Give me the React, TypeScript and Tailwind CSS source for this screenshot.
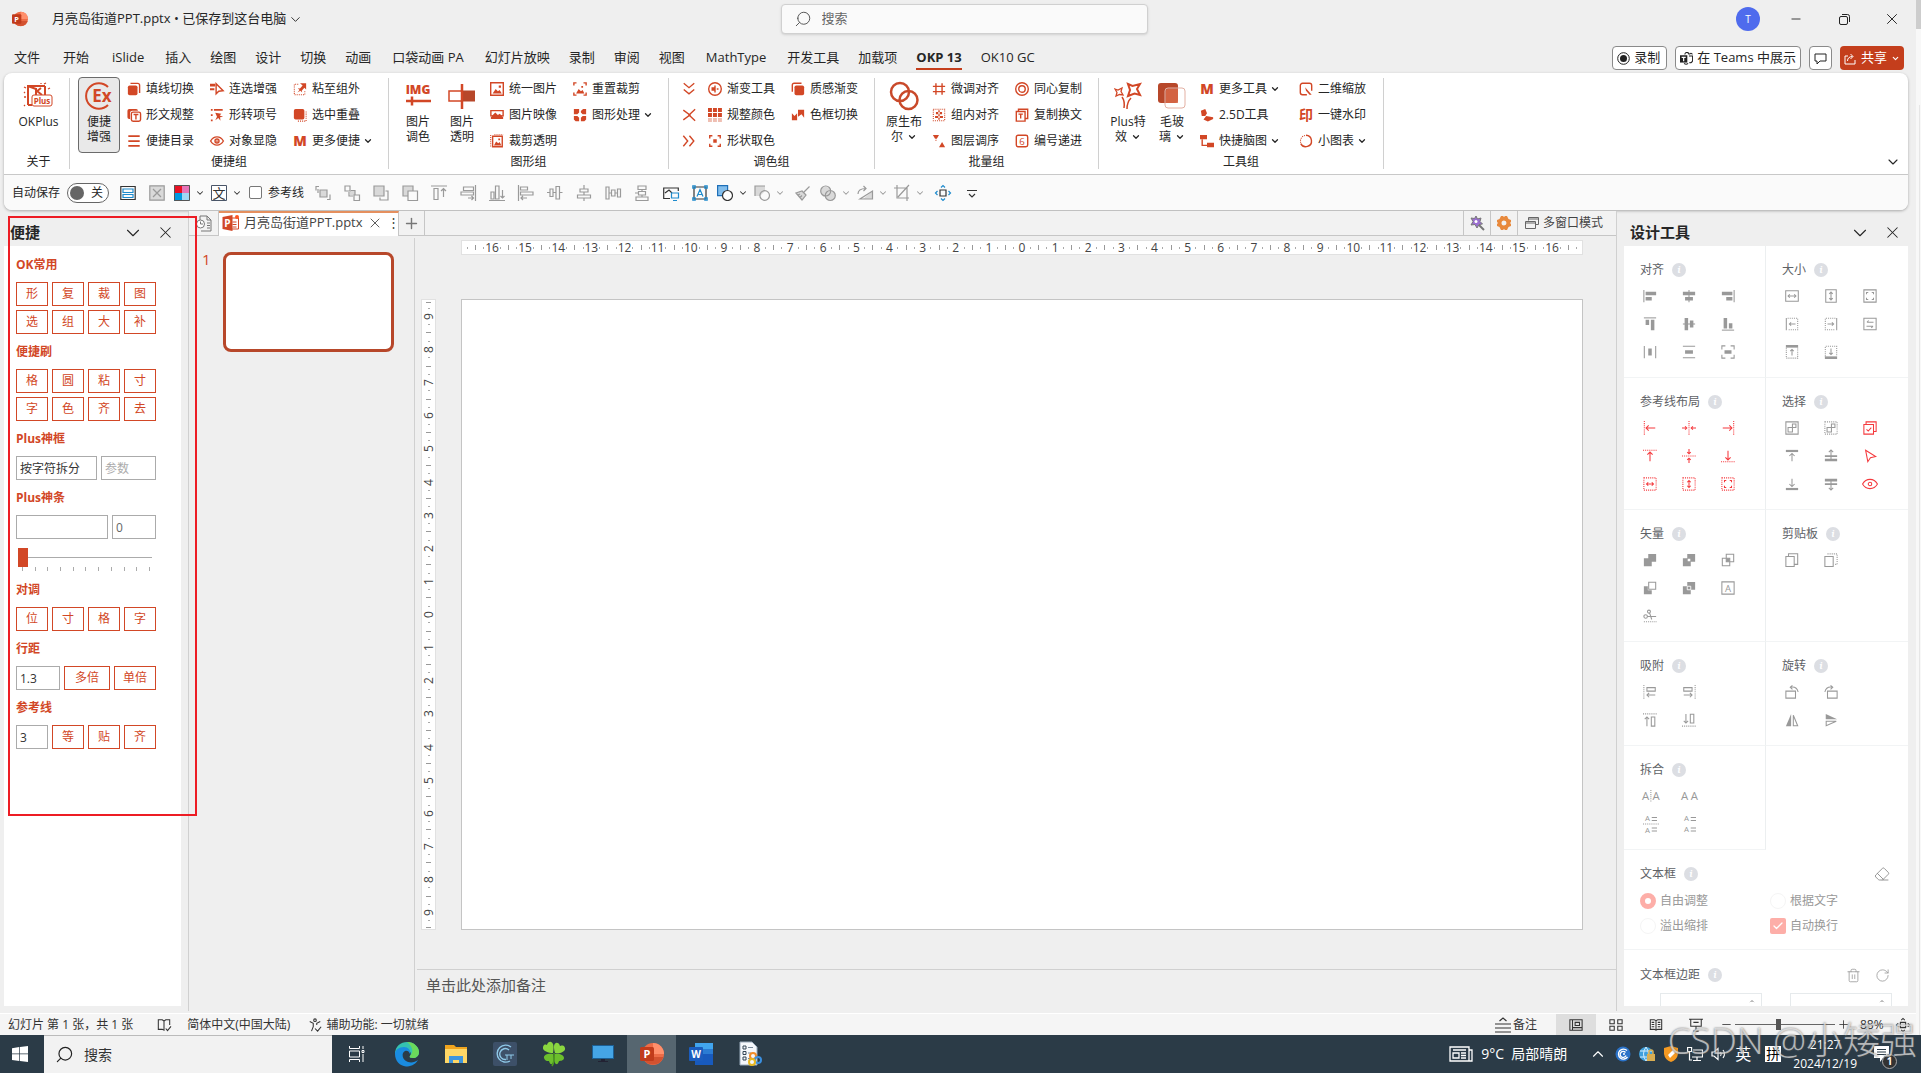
import type { ReactNode } from "react";
import { Check, ChevronDown, ChevronUp, Eraser, Minus, Plus, RotateCw, Search, Trash2, X } from "lucide-react";

type Shape = {
  s?: string; // stroked
  f?: string; // filled
  d?: string; // dotted
  l?: string; // light fill
  h?: string; // blue stroke
  w?: string; // white stroke
  t?: [string, number, number, number][];
};

const shapes: Record<string, Shape> = {
  // ribbon
  fillLine: { f: "M3 4h7a2 2 0 0 1 2 2v7a2 2 0 0 1-2 2H3a2 2 0 0 1-2-2V6a2 2 0 0 1 2-2z", s: "M4 1.600h8.400a2 2 0 0 1 2 2V12.500" },
  shapeText: { f: "M2.500 1h8a2 2 0 0 1 2 2H6a2.500 2.500 0 0 0-2.500 2.500v7H2.500a2 2 0 0 1-2-2V3a2 2 0 0 1 2-2z", s: "M7 4.700h6.500a2 2 0 0 1 2 2v6.500a2 2 0 0 1-2 2H7a2 2 0 0 1-2-2V6.700a2 2 0 0 1 2-2zM7.500 7.500h5.500M10.200 7.500v5.500" },
  menu: { f: "M1.500 1.500h13v2h-13zM1.500 7h13v2h-13zM1.500 12.500h13v2h-13z" },
  chain: { f: "M0 2h6v3H0zM0 7h5v2.500H0z", s: "M7 2v11.500l3-3 5-.5z" },
  shapeItem: { f: "M1 1h2v2H1zM4.500 1h10v2h-10zM1 7h2v2H1zM1 13h2v2H1zM6 5.500l7 1-2 2 4 1.500-3.500.5.500 4-2.500-3-3.500 2.500 2-4z" },
  eye: { s: "M.7 8S3.500 3.300 8 3.300 15.300 8 15.300 8 12.500 12.700 8 12.700.7 8 .7 8zM10.300 8a2.300 2.300 0 1 1-4.600 0 2.300 2.300 0 0 1 4.600 0z", f: "M9 8a1 1 0 1 1-2 0 1 1 0 0 1 2 0z" },
  pasteOut: { d: "M6 2.500H1.500v12h12V10", f: "M8 1.500h7v7l-2-2-3 3.500.5 2-2-2L5 12l2.500-3-2-2 2.500.3 3-3.300z" },
  overlap: { f: "M3 1h8a2 2 0 0 1 2 2v8a2 2 0 0 1-2 2H3a2 2 0 0 1-2-2V3a2 2 0 0 1 2-2z", d: "M15 4v11H5" },
  m: { t: [["M", 8, 13.500, 16]] },
  picture: { s: "M.8.8h14.400v14.400H.8z", f: "M3 13l3.500-5 2.500 2.500 2-1.500 2.500 4zM10 4h2.500v2.500H10z" },
  mirror: { s: "M1 3h14v6H1z", f: "M2 9l4-4 3 3 2-1.500L14 9v1H2zM1 10h14v2.500H1z" },
  cropClear: { s: "M3 2.500h11v12H3z", d: "M.8 1v14M5 .8h10", f: "M4.500 13L7 8.500l2.500 2 1.500-1.500 2 4zM9.500 5h2v2h-2z" },
  cropReset: { s: "M1 4V1h3M12 1h3v3M15 12v3h-3M4 15H1v-3", f: "M3.500 13L6.500 8l2.500 2.500 2-1.500 2 4zM9.500 4.500h2V6.500h-2z" },
  process: { f: "M1 1h6v4l-2 2H1zM9 3.500L11.500 1H15v6h-4L9 5zM1 9h4l2 2v4H3l-2-2zM9 11l2-2h4v4l-2 2H9z" },
  down2: { s: "M2 1.500l6 5 6-5M2 8.500l6 5 6-5" },
  cross: { s: "M1.500 2.500L9 8l-7.500 5.500M15 1.500L8 8l7 6.500" },
  right2: { s: "M1.500 2l5 6-5 6M8.500 2l5 6-5 6" },
  gradient: { s: "M15.200 8A7.200 7.200 0 1 1 .8 8a7.200 7.200 0 0 1 14.400 0zM8 4v8M10 8h2", f: "M4 6h4v4H4z" },
  palette: { f: "M0 0h4.500v4.500H0zM5.700 0h4.500v4.500H5.700zM11.400 0h4.500v4.500h-4.500zM0 5.700h4.500v4.500H0zM5.700 5.700h4.500v4.500H5.700zM11.400 5.700h4.500v4.500h-4.500z", l: "M0 11.400h4.500v4.500H0zM5.700 11.400h4.500v4.500H5.700zM11.400 11.400h4.500v4.500h-4.500z" },
  pick: { s: "M2 5V2h3M11 2h3v3M14 11v3h-3M5 14H2v-3", f: "M6 6h4v4H6z" },
  texture: { f: "M6 4h7a2 2 0 0 1 2 2v7a2 2 0 0 1-2 2H6a2 2 0 0 1-2-2V6a2 2 0 0 1 2-2z", s: "M1.500 11V3.500a2 2 0 0 1 2-2H12" },
  swapColor: { f: "M1 6l3 3 3-3v8H1zM8 2h7v9l-3-4-4 3z" },
  nudge: { s: "M1 5h14M1 11h14M4.500 1.500v13M11.500 1.500v13" },
  innerAlign: { d: "M1.500 1.500h13v13h-13z", f: "M7.200 2.500h1.600v11H7.200zM4.500 4.500h7v2.500h-7zM3.500 9h9v2.500h-9z" },
  layer: { f: "M1 1h7L4.500 7zM8 15h7l-3.500-6zM4 5h1v3H4z" },
  concentric: { s: "M15.200 8A7.200 7.200 0 1 1 .8 8a7.200 7.200 0 0 1 14.400 0zM11.700 8a3.700 3.700 0 1 1-7.400 0 3.700 3.700 0 0 1 7.400 0z" },
  copyText: { s: "M1.500 4h10v11h-10zM4 4V1.500h10.500V12H12M4 7h5M6.500 7v5" },
  number: { s: "M3.500 1.500h9a2 2 0 0 1 2 2v9a2 2 0 0 1-2 2h-9a2 2 0 0 1-2-2v-9a2 2 0 0 1 2-2z", t: [["6", 8, 12, 11]] },
  iso: { f: "M1 3l5-2 2 5-2 3H2zM4 13l3-4 8 1.500v2L9 15.500z" },
  mindmap: { f: "M0 1h8v5H0zM8 10h8v5H8z", s: "M2.500 6v7H8" },
  scale2d: { s: "M9 14.500H4A2.500 2.500 0 0 1 1.500 12v-8A2.500 2.500 0 0 1 4 1.500h8A2.500 2.500 0 0 1 14.500 4V10", f: "M7 6l7.500 8.500H12L8 10z" },
  stamp: { t: [["印", 8, 14, 16]] },
  donut: { s: "M8 1.500A6.500 6.500 0 1 1 2 11", d: "M2 10A6.500 6.500 0 0 1 8 1.500" },
  // quick access
  moveFwd: { l: "M5 5h7v7H5z", s: "M5 5h7v7H5zM4 1.500H1v4M3 4v4M12 14.500h3v-5" },
  group: { l: "M6 5h5v5H6z", s: "M1 1h5v5H1zM10 10h5.500v5.500H10zM7 5.500h4v4M5 7v4h4" },
  front: { l: "M1 1h10v10H1z", s: "M1 1h10v10H1zM12.500 6H15v9H7v-2.500" },
  back: { l: "M1 1h10v5H6v5H1z", s: "M6 11H1V1h10v5M6 6h9.500v9.500H6z" },
  alignTop: { s: "M0 1h16M3 3.500h4v11H3zM12.500 12V3.500M10 6l2.500-2.500L15 6" },
  alignRight: { s: "M15.500 0v16M3.500 2h10v3.500h-10zM1 7h12.500v3H1zM8 13h6M11.500 11l2 2-2 2" },
  alignBottom: { s: "M0 15.500h16M2 7h3v7H2zM6.500 1h3.500v13H6.500zM13.500 5v8M11.500 11l2 2 2-2" },
  alignLeft: { s: "M.5 0v16M2.500 2h7v3h-7zM2.500 7H15v3H2.500zM9 13H3M5 11l-2 2 2 2" },
  middleV: { s: "M0 7.500h3M6 7.500h3M12.500 7.500h3M3 4h3v7.500H3zM9 1.500h3.500v12.500H9z" },
  centerH: { s: "M8 0v4M8 7v3M8 13v3M4 4h8v3H4zM1.500 10h13v3h-13z" },
  distH: { s: "M1 2v12H4V2zM12.500 4v8h3V4zM6.500 5h3.500v6H6.500zM4 8h2.500M10 8h2.500" },
  distV: { s: "M4 1h8v3.500H4zM2 12h12v3.500H2zM4.500 6.500h7v3.500h-7zM8 4.500v2M8 10v2M1 8h3" },
  image: { s: "M7 13.500H.7V3h14.600v3M2 8l4-3 3 3", h: "M8.500 8h7v5h-7zM10 15.500h4" },
  textbox: { s: "M2 2h12v12H2z", h: "M.8.8h2.400v2.400H.8zM12.800.8h2.400v2.400h-2.400zM.8 12.800h2.400v2.400H.8zM12.800 12.800h2.400v2.400h-2.400zM5 11.500L8 4.500l3 7M6 9.500h4" },
  shapes: { l: "M1 1h10v5L6 11H1z", s: "M1 11V1h10M15.500 10.500a4.800 4.800 0 1 1-9.600 0 4.800 4.800 0 0 1 9.600 0z" },
  brush: { l: "M1 8l6 7 4-5-4-4z", s: "M1 8l6 7 4-5-4-4zM9 7l5.500-5.500M7 6l4 4M3 10l2-1M5 12.500l2-2" },
  circles: { l: "M10.500 6A5 5 0 1 1 .7 6a5 5 0 0 1 9.800 0zM15.300 10.500a5 5 0 1 1-10 0 5 5 0 0 1 10 0z", s: "M10.700 6A5 5 0 1 1 .7 6a5 5 0 0 1 10 0zM15.300 10.500a5 5 0 1 1-10 0 5 5 0 0 1 10 0z" },
  rotate: { l: "M6 14l9.500-8v8z", s: "M3 14h12.500V6zM1 9c0-4 3-5.500 8-5.500M6.500 1L9 3.500 6.500 6" },
  crop: { s: "M3 0v13h12M0 3h13v13M4 12L15 0" },
  fit: { s: "M5 5h6v6H5z", h: "M6 2.500L8 .5l2 2M6 13.500l2 2 2-2M2.500 6L.5 8l2 2M13.500 6l2 2-2 2" },
  fitDark: { s: "M5 5h6v6H5zM6 2.500L8 .5l2 2M6 13.500l2 2 2-2M2.500 6L.5 8l2 2M13.500 6l2 2-2 2" },
  more: { s: "M3 5.500h10M5 9l3 3 3-3" },
  boxX: { l: "M.8.8h14.400v14.400H.8z", s: "M.8.8h14.400v14.400H.8zM4 4l8 8M12 4l-8 8" },
  layout: { s: "M.8 1.500h14.400v13H.8z", h: "M3 4h10v3.500H3zM3 9.500h10v3H3z" },
  // design tools
  dLeft: { s: "M1 1v14", f: "M3 3h12v4H3zM3 9h7v4H3z" },
  dCenter: { s: "M8 1v14", f: "M1 3h14v4H1zM3.500 9h9v4h-9z" },
  dRight: { s: "M15 1v14", f: "M1 3h12v4H1zM6 9h7v4H6z" },
  dTop: { s: "M1 1h14", f: "M3 3h4v6H3zM9 3h4v12H9z" },
  dMiddle: { s: "M1 8h14", f: "M3 1h4v14H3zM9 4h4v8H9z" },
  dBottom: { s: "M1 15h14", f: "M3 1h4v12H3zM9 7h4v6H9z" },
  dDistH: { s: "M1.500 1v14M14.500 1v14", f: "M6 4h4v8H6z" },
  dDistV: { s: "M1 1.500h14M1 14.500h14", f: "M3.500 6h9v4h-9z" },
  dCenterBox: { s: "M1 5V1h4M11 1h4v4M15 11v4h-4M5 15H1v-4", f: "M4 6h8v4H4z" },
  sizeW: { s: "M.8 2h14.400v12H.8zM4 8h8M5.500 6L3.500 8l2 2M10.500 6l2 2-2 2" },
  sizeH: { s: "M2 .8h12v14.400H2zM8 4v8M6 5.500l2-2 2 2M6 10.500l2 2 2-2" },
  sizeBoth: { s: "M1 1h14v14H1zM4 6V4h2M10 4h2v2M12 10v2h-2M6 12H4v-2" },
  extL: { s: "M1.500 1v14M5 8h7M7 6L5 8l2 2", d: "M3 1.500h11.500v13H3" },
  extR: { s: "M14.500 1v14M4 8h7M9 6l2 2-2 2", d: "M13 1.500H1.500v13H13" },
  swap: { s: "M1 1.500h14v13H1zM4.500 6H12M6.500 4l-2 2M4 10.500h7.500M9.500 12.500l2-2" },
  extT: { f: "M1 0h14v3H1z", s: "M8 5v7M6 7l2-2 2 2", d: "M1.500 3v12h13V3" },
  extB: { f: "M1 13h14v3H1z", s: "M8 4v7M6 9l2 2 2-2", d: "M1.500 13V1.500h13V13" },
  gLeft: { d: "M1.500 0v16", s: "M3.500 8H14M6.500 5l-3 3 3 3" },
  gCenter: { d: "M8 0v16", s: "M0 8h5.500M3.500 6l2 2-2 2M16 8h-5.500M12.500 6l-2 2 2 2" },
  gRight: { d: "M14.500 0v16", s: "M12.500 8H2M9.500 5l3 3-3 3" },
  gTop: { d: "M0 1.500h16", s: "M8 3.500V14M5 6.500l3-3 3 3" },
  gMiddle: { d: "M0 8h16", s: "M8 0v5.500M6 3.500l2 2 2-2M8 16v-5.500M6 12.500l2-2 2 2" },
  gBottom: { d: "M0 14.500h16", s: "M8 12.500V2M5 9.500l3 3 3-3" },
  gW: { d: "M1 1h14v14H1z", s: "M4 8h8M6 6L4 8l2 2M10 6l2 2-2 2" },
  gH: { d: "M1 1h14v14H1z", s: "M8 4v8M6 6l2-2 2 2M6 10l2 2 2-2" },
  gBox: { d: "M1 1h14v14H1z", s: "M4 6V4h2M10 4h2v2M12 10v2h-2M6 12H4v-2" },
  selAll: { s: "M1 1h14v14H1zM3.500 7.500h5v5h-5zM8.500 3.500h4v4h-4z" },
  selDot: { d: "M1 1h14v14H1z", s: "M3.500 7.500h5v5h-5zM8.500 3.500h4v4h-4z" },
  selCheck: { s: "M1 4h11v11H1zM3.500 4V1H15v11h-3M4 9.500l2 2 3.500-4" },
  up: { f: "M1 1h14v2.500H1z", s: "M8 5v9M5 8l3-3 3 3" },
  upOver: { f: "M1 7h14v2H1zM1 11h14v3H1z", s: "M8 1v11M5.500 3.500L8 1l2.500 2.500" },
  cursor: { s: "M3 1.500l11.500 7-6 1.500-3 4.500z" },
  down: { f: "M1 12.500h14V15H1z", s: "M8 2v9M5 8l3 3 3-3" },
  downOver: { f: "M1 2h14v3H1zM1 7h14v2H1z", s: "M8 4v11M5.500 12.500L8 15l2.500-2.500" },
  watch: { s: "M-.5 8S2.500 2.700 8 2.700 16.500 8 16.500 8 13.500 13.300 8 13.300-.5 8-.5 8zM10 8a2 2 0 1 1-4 0 2 2 0 0 1 4 0z" },
  union: { f: "M6 1h9v9h-5v5H1V6h5z" },
  combine: { f: "M6 1h9v9h-5v5H1V6h5zM6.500 6.500v3h3v-3z" },
  intersect: { s: "M6 1.500h8.500V10H6zM1.500 6H10v8.500H1.500z", f: "M6 6h4v4H6z" },
  subtract: { s: "M6.500 1.500h8V9.500h-8z", f: "M1 6h4.500v4.500H10V15H1z" },
  split: { f: "M6 1h9v9h-5v5H1V6h5z", w: "M6 6h4v4H6z" },
  letterBox: { s: "M1 1h14v14H1z", t: [["A", 8, 12, 11]] },
  cut: { s: "M5 8.500a2 2 0 1 1-4 0 2 2 0 0 1 4 0zM8.500 3a1.700 1.700 0 1 1-3.400 0 1.700 1.700 0 0 1 3.400 0zM5 8.500h10M7.500 4.500L10 12", d: "M1 14.500h15" },
  copy: { s: "M1 4h9.500v11.500H1zM4 4V.8h10.500V13h-4" },
  copyDot: { s: "M1 4h9.500v11.500H1z", d: "M4 1h11v12h-3" },
  snapL: { d: "M1 0v16", s: "M4.500 3H14v4H4.500zM14 11.500H4.500M7 9l-2.500 2.500L7 14" },
  snapR: { d: "M15 0v16", s: "M2 3h9.500v4H2zM2 11.500h9.500M9 9l2.500 2.500L9 14" },
  snapT: { d: "M0 1h16", s: "M9.500 4.500h4V15h-4zM4.500 15V4.500M2 7l2.500-2.500L7 7" },
  snapB: { d: "M0 15h16", s: "M9.500 1.500h4V11.500h-4zM4.500 1v10.500M2 9l2.500 2.500L7 9" },
  rotL: { s: "M1 7h11v8H1zM6 2.500c5-1 8 1 9 5.500M8.500.5L6 2.500 8.500 5" },
  rotR: { s: "M4 7h11v8H4zM10 2.500c-5-1-8 1-9 5.500M7.500.5L10 2.500 7.500 5" },
  flipH: { f: "M7 1v14H1z", s: "M9.500 2.500V14.500H14.500z" },
  flipV: { f: "M2 1v6h13z", s: "M2.500 14.500V9.500H14z" },
  splitH: { d: "M9 1v14", t: [["A", 3, 12.500, 13], ["A", 15, 12.500, 13]] },
  mergeH: { t: [["A", 3, 12.500, 13], ["A", 14, 12.500, 13]] },
  splitV: { d: "M0 8h18", s: "M10 .5h6M10 4h6M10 12.500h6M10 16h6", t: [["A", 5, 5, 9], ["A", 5, 18, 9]] },
  mergeV: { s: "M10 .5h6M10 4h6M10 12.500h6M10 16h6", t: [["A", 5, 5, 9], ["A", 5, 17, 9]] },
  // status bar
  book: { s: "M1.500 2H6l2 1.500V14l-2-1H1.500zM14.500 8V2H10L8 3.500M10 12l2 2.500 4-5" },
  access: { s: "M9.500 2.500a1.500 1.500 0 1 1-3 0 1.500 1.500 0 0 1 3 0zM2 4l4 2v4l-2 5M14 4l-4 2v2M8 12l3 3 4-5" },
  notes: { s: "M0 7h16M0 11h16M0 15h16M4.500 4L8 1l3.500 3" },
  normal: { s: "M1 2h14v12H1zM4 2v12M4 11h11M7 5h5v3.500H7z" },
  sorter: { s: "M1 2h5v4.500H1zM10 2h5v4.500h-5zM1 9.500h5V14H1zM10 9.500h5V14h-5z" },
  reading: { s: "M8 3L6 2H1.500v11H6l2 1 2-1h4.500V2H10zM8 3v11M3 5h3M3 7.500h3M3 10h3M10 5h3M10 7.500h3M10 10h3" },
  show: { s: "M0 1.500h16M2 1.500v8h12v-8M8 9.500v5M5 15h6M5 5h6" },
};

type GlyphProps = { name: string; size?: number; weight?: number; className?: string };

function Glyph({ name, size = 14, weight = 1.2, className }: GlyphProps) {
  const g = shapes[name];
  return (
    <svg width={size} height={size} viewBox="0 0 16 16" className={`shrink-0 overflow-visible ${className ?? ""}`} aria-hidden="true">
      {g.l ? <path d={g.l} fill="currentColor" opacity={0.35} /> : null}
      {g.f ? <path d={g.f} fill="currentColor" fillRule="evenodd" /> : null}
      {g.s ? <path d={g.s} fill="none" stroke="currentColor" strokeWidth={weight} /> : null}
      {g.d ? <path d={g.d} fill="none" stroke="currentColor" strokeWidth={1.2} strokeDasharray="1.2 1.2" /> : null}
      {g.h ? <path d={g.h} fill="none" stroke="#1e8bcd" strokeWidth={1.2} /> : null}
      {g.w ? <path d={g.w} fill="none" stroke="#fff" strokeWidth={1} /> : null}
      {g.t?.map(([text, x, y, fontSize]) => (
        <text key={`${x}-${y}`} x={x} y={y} fontSize={fontSize} fontWeight={name === "m" ? 900 : name === "stamp" ? 700 : 500} textAnchor="middle" fill="currentColor">
          {text}
        </text>
      ))}
    </svg>
  );
}

const tabs: { label: string; wide?: boolean }[] = [
  { label: "文件", wide: true },
  { label: "开始", wide: true },
  { label: "iSlide", wide: true },
  { label: "插入" },
  { label: "绘图" },
  { label: "设计" },
  { label: "切换" },
  { label: "动画" },
  { label: "口袋动画 PA", wide: true },
  { label: "幻灯片放映" },
  { label: "录制" },
  { label: "审阅" },
  { label: "视图" },
  { label: "MathType", wide: true },
  { label: "开发工具" },
  { label: "加载项" },
  { label: "OKP 13" },
  { label: "OK10 GC" },
];

type Command = { icon: string; label: string; menu?: boolean };

function CommandColumn({ items, className }: { items: Command[]; className: string }) {
  return (
    <div className={`-mt-px flex shrink-0 flex-col ${className}`}>
      {items.map((item) => (
        <button key={item.icon} type="button" aria-label={item.label || item.icon} className="flex h-[26px] items-center gap-[5px] whitespace-nowrap text-xs">
          <Glyph name={item.icon} weight={1.6} className="text-[#d24726]" />
          {item.label}
          {item.menu ? <ChevronDown size={10} strokeWidth={3} className="-ml-0.5" /> : null}
        </button>
      ))}
    </div>
  );
}

function BigCommand({ art, lines, active, menu, className }: { art: ReactNode; lines: string[]; active?: boolean; menu?: boolean; className: string }) {
  return (
    <button
      type="button"
      className={`flex h-[76px] shrink-0 flex-col items-center rounded border pt-[3px] text-xs leading-[15px] whitespace-nowrap ${
        active ? "border-[#6b6b6b] bg-[#e9e9e9]" : "border-transparent"
      } ${className}`}
    >
      <span className="mb-[3px] flex h-[30px] items-center">{art}</span>
      <span>{lines[0]}</span>
      <span className="flex items-center gap-1">
        {lines[1]}
        {menu ? <ChevronDown size={10} strokeWidth={3} /> : null}
      </span>
    </button>
  );
}

function RibbonGroup({ label, className, children }: { label: string; className: string; children: ReactNode }) {
  return (
    <section className={`mt-[5px] flex h-[91px] shrink-0 flex-col border-r border-[#d0d0d0] ${className}`}>
      <div className="-mt-px flex h-[78px]">{children}</div>
      <p className="text-center text-xs leading-[14px]">{label}</p>
    </section>
  );
}

const okArt = (
  <svg width="30" height="26" viewBox="0 0 30 26" fill="none" stroke="#d24726" className="overflow-visible">
    <path d="M5 3v19M4 3h18M22 3v9M5 22h4M5 3l8 3v14" strokeWidth="2" />
    <path d="M13 11V5M13 9l5-4M14 8l5 4" strokeWidth="2" />
    <path d="M2 9l-1 1M3 5L1 4M18 1v-1M21 1l2-1M25 6l2-1M1 14h2M2 22l-1 1" strokeWidth="1.300" />
    <rect x="9" y="12" width="20" height="11" rx="2" fill="#fff" />
    <text x="19" y="21" fontSize="8" fontWeight="700" textAnchor="middle" fill="#d24726" stroke="none">Plus</text>
  </svg>
);
const exArt = (
  <svg width="28" height="28" viewBox="0 0 28 28" fill="none" className="overflow-visible">
    <path d="M23 5A12.800 12.800 0 1 0 23 23" stroke="#d24726" strokeWidth="2" />
    <text x="17" y="20" fontSize="17" fontWeight="700" textAnchor="middle" fill="#d24726">Ex</text>
  </svg>
);
const imgArt = (
  <svg width="28" height="28" viewBox="0 0 28 28" className="overflow-visible">
    <text x="14" y="12" fontSize="12" fontWeight="800" textAnchor="middle" fill="#d24726">IMG</text>
    <path d="M2 19h25M8 14.500v9" stroke="#d24726" strokeWidth="2.500" />
  </svg>
);
const opacityArt = (
  <svg width="28" height="28" viewBox="0 0 28 28" fill="none" stroke="#d24726" strokeWidth="1.500">
    <rect x="1" y="9" width="13" height="10" />
    <rect x="15" y="8.500" width="12" height="11" fill="#b7472a" stroke="none" />
    <path d="M14 2v25" strokeWidth="2.500" />
  </svg>
);
const boolArt = (
  <svg width="30" height="30" viewBox="0 0 30 30" fill="none" stroke="#c9492a" strokeWidth="2.500">
    <circle cx="11" cy="11" r="9" />
    <circle cx="19.500" cy="19" r="9" />
  </svg>
);
const sparkArt = (
  <svg width="28" height="28" viewBox="0 0 28 28" fill="none" stroke="#d24726">
    <path d="M14 2l4.500 2L26 2l-3 5 3 6-5.500-1.500L14 14l2-6z" strokeWidth="2" />
    <path d="M1 7l3 1 4-2-1 3.500L9 13l-3.500-.5L2 14l1-3.500z" strokeWidth="1.300" />
    <path d="M8 15q3 4 2 11M17 16q-4 4-4 11" strokeWidth="1.500" />
  </svg>
);
const glassArt = (
  <svg width="28" height="28" viewBox="0 0 28 28">
    <rect x="0" y="1" width="20" height="20" rx="3" fill="#b7472a" />
    <rect x="7" y="6" width="20" height="20" rx="3" fill="#fff" fillOpacity="0.100" stroke="#e3b0a3" />
    <path d="M8 9q0-2 2-2h10v14H8z" fill="#d86545" fillOpacity="0.800" />
  </svg>
);

function Ribbon() {
  return (
    <div className="flex min-w-0 flex-1 overflow-hidden">
      <RibbonGroup label="关于" className="w-[66px] pl-1">
        <BigCommand art={okArt} lines={["OKPlus", ""]} className="mx-auto" />
      </RibbonGroup>
      <RibbonGroup label="便捷组" className="w-[319px]">
        <BigCommand art={exArt} lines={["便捷", "增强"]} active className="ml-2 w-[42px]" />
        <CommandColumn className="ml-[7px] w-[83px]" items={[{ icon: "fillLine", label: "填线切换" }, { icon: "shapeText", label: "形文规整" }, { icon: "menu", label: "便捷目录" }]} />
        <CommandColumn className="w-[83px]" items={[{ icon: "chain", label: "连选增强" }, { icon: "shapeItem", label: "形转项号" }, { icon: "eye", label: "对象显隐" }]} />
        <CommandColumn className="w-[83px]" items={[{ icon: "pasteOut", label: "粘至组外" }, { icon: "overlap", label: "选中重叠" }, { icon: "m", label: "更多便捷", menu: true }]} />
      </RibbonGroup>
      <RibbonGroup label="图形组" className="w-[280px]">
        <BigCommand art={imgArt} lines={["图片", "调色"]} className="ml-2 w-[42px]" />
        <BigCommand art={opacityArt} lines={["图片", "透明"]} className="ml-0.5 w-[42px]" />
        <CommandColumn className="ml-[7px] w-[83px]" items={[{ icon: "picture", label: "统一图片" }, { icon: "mirror", label: "图片映像" }, { icon: "cropClear", label: "裁剪透明" }]} />
        <CommandColumn className="w-[83px]" items={[{ icon: "cropReset", label: "重置裁剪" }, { icon: "process", label: "图形处理", menu: true }]} />
      </RibbonGroup>
      <RibbonGroup label="调色组" className="w-[206px]">
        <CommandColumn className="ml-[13px] w-[26px]" items={[{ icon: "down2", label: "" }, { icon: "cross", label: "" }, { icon: "right2", label: "" }]} />
        <CommandColumn className="w-[83px]" items={[{ icon: "gradient", label: "渐变工具" }, { icon: "palette", label: "规整颜色" }, { icon: "pick", label: "形状取色" }]} />
        <CommandColumn className="w-[83px]" items={[{ icon: "texture", label: "质感渐变" }, { icon: "swapColor", label: "色框切换" }]} />
      </RibbonGroup>
      <RibbonGroup label="批量组" className="w-[224px]">
        <BigCommand art={boolArt} lines={["原生布", "尔"]} menu className="ml-2 w-[42px]" />
        <CommandColumn className="ml-[7px] w-[83px]" items={[{ icon: "nudge", label: "微调对齐" }, { icon: "innerAlign", label: "组内对齐" }, { icon: "layer", label: "图层调序" }]} />
        <CommandColumn className="w-[83px]" items={[{ icon: "concentric", label: "同心复制" }, { icon: "copyText", label: "复制换文" }, { icon: "number", label: "编号递进" }]} />
      </RibbonGroup>
      <RibbonGroup label="工具组" className="w-[285px]">
        <BigCommand art={sparkArt} lines={["Plus特", "效"]} menu className="ml-2 w-[42px]" />
        <BigCommand art={glassArt} lines={["毛玻", "璃"]} menu className="ml-0.5 w-[42px]" />
        <CommandColumn className="ml-[7px] w-[99px]" items={[{ icon: "m", label: "更多工具", menu: true }, { icon: "iso", label: "2.5D工具" }, { icon: "mindmap", label: "快捷脑图", menu: true }]} />
        <CommandColumn className="w-[83px]" items={[{ icon: "scale2d", label: "二维缩放" }, { icon: "stamp", label: "一键水印" }, { icon: "donut", label: "小图表", menu: true }]} />
      </RibbonGroup>
    </div>
  );
}

function QuickButton({ name, menu, dark, children }: { name: string; menu?: boolean; dark?: boolean; children?: ReactNode }) {
  return (
    <button
      type="button"
      aria-label={name}
      className={`flex h-7 shrink-0 items-center ${menu ? "w-[37px] gap-[5px] pl-[3px]" : "w-[29px] justify-center"} ${dark ? "text-[#333]" : "text-[#9a9a9a]"}`}
    >
      {children ?? <Glyph name={name} size={16} />}
      {menu ? <ChevronDown size={10} strokeWidth={2.5} /> : null}
    </button>
  );
}

function QuickAccess() {
  return (
    <div className="flex h-9 items-center overflow-hidden rounded-b-lg border-t border-[#c8c8c8] bg-[#fafafa] pl-2 text-xs">
      <label className="mr-1 flex shrink-0 items-center gap-[7px]">
        自动保存
        <input type="checkbox" role="switch" className="sr-only" />
        <span className="flex h-5 w-[42px] items-center gap-[7px] rounded-full border border-[#666] bg-white pl-0.5">
          <span className="size-3.5 rounded-full bg-[#666]" />
          <span>关</span>
        </span>
      </label>
      <QuickButton name="layout" dark />
      <QuickButton name="boxX" />
      <QuickButton name="colors" menu dark>
        <svg width="16" height="16" viewBox="0 0 16 16">
          <path d="M0 0h8v8H0z" fill="#e81123" />
          <path d="M8 0h8v8H8z" fill="#e874b8" />
          <path d="M0 8h8v8H0z" fill="#0099e0" />
          <path d="M8 8h8v8H8z" fill="#a0d8f5" />
          <path d="M.5.5h15v15H.5z" fill="none" stroke="#555" />
        </svg>
      </QuickButton>
      <QuickButton name="font" menu dark>
        <svg width="16" height="16" viewBox="0 0 16 16">
          <path d="M.5.5h15v15H.5z" fill="#fff" stroke="#4a5568" />
          <text x="8" y="13" fontSize="13" textAnchor="middle" fill="#333">文</text>
        </svg>
      </QuickButton>
      <label className="flex shrink-0 items-center gap-1.5 px-1">
        <input type="checkbox" className="size-[13px] appearance-none rounded-xs border border-[#777] bg-white" />
        参考线
      </label>
      {["moveFwd", "group", "front", "back", "alignTop", "alignRight", "alignBottom", "alignLeft", "middleV", "centerH", "distH", "distV"].map((name) => (
        <QuickButton key={name} name={name} />
      ))}
      <QuickButton name="image" dark />
      <QuickButton name="textbox" dark />
      <QuickButton name="shapes" menu dark>
        <svg width="16" height="16" viewBox="0 0 16 16">
          <path d="M.6.6h10v10h-10z" fill="#83beec" stroke="#1e6fb8" strokeWidth="1.200" />
          <circle cx="10.500" cy="10.500" r="5" fill="#fff" stroke="#333" strokeWidth="1.200" />
        </svg>
      </QuickButton>
      <QuickButton name="shapes" menu />
      <QuickButton name="brush" />
      <QuickButton name="circles" menu />
      <QuickButton name="rotate" menu />
      <QuickButton name="crop" menu />
      <QuickButton name="fit" dark />
      <QuickButton name="more" dark />
    </div>
  );
}

function PptLogo({ size }: { size: number }) {
  return (
    <svg width={size} height={size} viewBox="0 0 24 24" className="shrink-0">
      <circle cx="13" cy="12" r="11" fill="#ed6c47" />
      <path d="M13 1a11 11 0 0 1 11 11H13z" fill="#ff8f6b" />
      <path d="M2.500 15h20.900A11 11 0 0 1 2.500 15z" fill="#d35230" />
      <rect x="0" y="5" width="14" height="14" rx="1.500" fill="#c13b1b" />
      <text x="7" y="16" fontSize="11" fontWeight="700" textAnchor="middle" fill="#fff">P</text>
    </svg>
  );
}

function TitleBar() {
  return (
    <div className="grid h-[38px] grid-cols-[1fr_367px_1fr] items-center pl-3 text-[13px]">
      <div className="flex items-center">
        <PptLogo size={16} />
        <button type="button" className="ml-6 flex items-center gap-0.5 whitespace-nowrap">
          月亮岛街道PPT.pptx • 已保存到这台电脑
          <ChevronDown size={15} strokeWidth={1.5} />
        </button>
      </div>
      <label className="flex h-[30px] items-center gap-2.5 rounded border border-[#d0d0d0] bg-[#fafafa] px-3 shadow-sm">
        <Search size={18} strokeWidth={1.3} className="-scale-x-100 text-[#555]" />
        <input type="text" placeholder="搜索" aria-label="搜索" className="min-w-0 flex-1 bg-transparent outline-none placeholder:text-[#666]" />
      </label>
      <div className="flex items-center justify-end">
        <span className="mr-3 flex size-6 items-center justify-center rounded-full bg-[#4f6bed] text-[10px] text-white">T</span>
        <button type="button" aria-label="最小化" className="flex w-12 justify-center"><Minus size={14} strokeWidth={1.5} /></button>
        <button type="button" aria-label="还原" className="flex w-12 justify-center">
          <svg width="11" height="11" viewBox="0 0 11 11" fill="none" stroke="#222">
            <rect x="0.500" y="2.500" width="8" height="8" rx="1.500" />
            <path d="M3 .5h5.500a2 2 0 0 1 2 2V8" />
          </svg>
        </button>
        <button type="button" aria-label="关闭" className="flex w-12 justify-center"><X size={18} strokeWidth={1.3} /></button>
      </div>
    </div>
  );
}

function TabRow() {
  const pill = "flex h-6 items-center gap-1 rounded border border-[#8a8a8a] bg-white px-1";
  return (
    <div className="flex h-[35px] items-start text-[13px]">
      <nav className="flex flex-1 gap-px pl-[3px]">
        {tabs.map((tab) => (
          <button key={tab.label} type="button" className={`flex h-[34px] flex-col items-center pt-2 whitespace-nowrap ${tab.wide ? "px-[11px]" : "px-[9px]"}`}>
            <span className={`leading-[22px] ${tab.label === "OKP 13" ? "border-b-2 border-[#c43e1c] font-bold" : ""}`}>{tab.label}</span>
          </button>
        ))}
      </nav>
      <div className="mt-2 mr-3 flex gap-2 whitespace-nowrap">
        <button type="button" className={pill}>
          <svg width="13" height="13" viewBox="0 0 13 13"><circle cx="6.500" cy="6.500" r="5.800" fill="none" stroke="#222" /><circle cx="6.500" cy="6.500" r="3.500" fill="#222" /></svg>
          <span className="pr-0.5">录制</span>
        </button>
        <button type="button" className={pill}>
          <svg width="13" height="13" viewBox="0 0 16 16">
            <path d="M6 3a2.500 2.500 0 0 1 5 0M11 5h4.500v5a3 3 0 0 1-4 3M10 14a4 4 0 0 1-5 0M12 3a1.500 1.500 0 1 1 3 0" fill="none" stroke="#222" strokeWidth="1.300" />
            <path d="M0 4h9v9H0z" fill="#222" />
            <path d="M2 6.500h5M4.500 6.500v5" stroke="#fff" strokeWidth="1.500" />
          </svg>
          在 Teams 中展示
        </button>
        <button type="button" aria-label="批注" className={pill}>
          <svg width="13" height="13" viewBox="0 0 13 13" fill="none" stroke="#222"><path d="M1 2h11v7H6l-3 3V9H1z" /></svg>
        </button>
        <button type="button" className="flex h-6 items-center gap-1 rounded bg-[#c43e1c] px-1 text-white">
          <svg width="13" height="13" viewBox="0 0 13 13" fill="none" stroke="#fff"><path d="M4 4H1v8h10V8M3.500 9c0-3 2-4.500 5-4.500M6.500 2L9 4.500 6.500 7" /></svg>
          共享
          <ChevronDown size={9} strokeWidth={3} />
        </button>
      </div>
    </div>
  );
}

function PaneHeader({ title, className }: { title: string; className: string }) {
  return (
    <div className={`flex h-[35px] shrink-0 items-center pt-2 ${className}`}>
      <h2 className="flex-1 text-[15px] font-bold">{title}</h2>
      <button type="button" aria-label="选项" className="mr-3 flex"><ChevronDown size={22} strokeWidth={1.2} /></button>
      <button type="button" aria-label="关闭窗格" className="flex"><X size={19} strokeWidth={1.3} /></button>
    </div>
  );
}

function Keys({ labels }: { labels: string }) {
  return (
    <>
      {labels.split("").map((label) => (
        <button key={label} type="button" className="h-6 border border-[#d24726] text-[#d24726]">{label}</button>
      ))}
    </>
  );
}

function ShortcutPane() {
  const heading = "flex h-[35px] items-center font-bold text-[#d24726]";
  const keys = "grid grid-cols-4 gap-1";
  const box = "h-6 min-w-0 border border-[#ababab] bg-white px-[3px] outline-none";
  return (
    <aside className="mr-[7px] ml-1 flex w-[177px] shrink-0 flex-col">
      <PaneHeader title="便捷" className="pr-1.5 pl-1.5" />
      <div className="mb-[5px] min-h-0 flex-1 overflow-hidden bg-white pt-px pl-3 text-xs text-[#333]">
        <div className="w-[140px]">
          <h3 className={heading}>OK常用</h3>
          <div className={keys}><Keys labels="形复裁图选组大补" /></div>
          <h3 className={heading}>便捷刷</h3>
          <div className={keys}><Keys labels="格圆粘寸字色齐去" /></div>
          <h3 className={heading}>Plus神框</h3>
          <div className="flex gap-1">
            <input aria-label="拆分方式" defaultValue="按字符拆分" className={`${box} w-[81px]`} />
            <input aria-label="参数" placeholder="参数" className={`${box} w-[55px] placeholder:text-[#ababab]`} />
          </div>
          <h3 className={heading}>Plus神条</h3>
          <div className="flex gap-1">
            <input aria-label="神条" className={`${box} w-[92px]`} />
            <input aria-label="神条数值" defaultValue="0" className={`${box} w-11 text-[#666]`} />
          </div>
          <div className="h-[33px] px-0.5 pt-[9px]">
            <input
              type="range"
              aria-label="神条滑块"
              defaultValue={0}
              className="block h-[19px] w-[134px] appearance-none bg-[linear-gradient(#ababab,#ababab)] bg-[length:100%_1px] bg-center bg-no-repeat [&::-webkit-slider-thumb]:h-[19px] [&::-webkit-slider-thumb]:w-[10px] [&::-webkit-slider-thumb]:appearance-none [&::-webkit-slider-thumb]:bg-[#d24726]"
            />
            <div className="flex h-1 w-[132px] justify-between pl-1">
              {Array.from({ length: 11 }, (_, i) => <span key={i} className="h-1 w-px bg-[#ababab]" />)}
            </div>
          </div>
          <h3 className={heading}>对调</h3>
          <div className={keys}><Keys labels="位寸格字" /></div>
          <h3 className={heading}>行距</h3>
          <div className="flex gap-1">
            <input aria-label="行距" defaultValue="1.3" className={`${box} w-11`} />
            <button type="button" className="h-6 w-[46px] border border-[#d24726] text-[#d24726]">多倍</button>
            <button type="button" className="h-6 w-[42px] border border-[#d24726] text-[#d24726]">单倍</button>
          </div>
          <h3 className={heading}>参考线</h3>
          <div className={keys}>
            <input aria-label="参考线" defaultValue="3" className={box} />
            <Keys labels="等贴齐" />
          </div>
        </div>
      </div>
    </aside>
  );
}

// A ruler is a run of quarter-centimetre slots: number, dot, half tick, dot.
function Ruler({ quarters, vertical }: { quarters: number; vertical?: boolean }) {
  const slots = Array.from({ length: quarters * 2 + 1 }, (_, i) => i - quarters);
  return (
    <div className={`flex border border-[#e1e1e1] bg-white text-xs leading-3 text-[#444] ${vertical ? "w-[15px] flex-col" : "h-[15px] px-px"}`}>
      {slots.map((k) => {
        const atEnd = vertical && Math.abs(k) === quarters;
        let mark: ReactNode;
        if (k % 4 === 0) {
          mark = <span className={vertical ? "rotate-180 [writing-mode:vertical-rl]" : ""}>{Math.abs(k) / 4}</span>;
        } else if (k % 2 === 0) {
          mark = <span className={`shrink-0 bg-[#999] ${vertical ? "h-px w-[5px]" : "h-[5px] w-px"}`} />;
        } else {
          mark = <span className={`shrink-0 bg-[#aaa] ${vertical ? "h-px w-0.5" : "h-0.5 w-px"}`} />;
        }
        return (
          <span key={k} className={`flex min-h-0 min-w-0 items-center justify-center ${atEnd ? "h-1 flex-none" : "flex-1 basis-0"}`}>
            {mark}
          </span>
        );
      })}
    </div>
  );
}

function DocumentTabs() {
  return (
    <div className="flex h-[25px] shrink-0 border-b border-[#c6c6c6] bg-[#f2f2f2] text-[#444]">
      <button type="button" aria-label="最近文档" className="flex w-[30px] items-center justify-center border-r border-[#c6c6c6]">
        <svg width="16" height="17" viewBox="0 0 16 17" fill="none" stroke="#777">
          <path d="M4 5V1h7l4 4v11H5M11 1v4h4M11 8h3M11 10.500h3M11 13h3" />
          <circle cx="4.500" cy="9" r="4" fill="#fff" />
          <path d="M4.500 6.500V9H7" />
        </svg>
      </button>
      <div className="-mb-px flex w-[180px] items-center gap-1 border-t-2 border-r border-t-[#e5905f] border-r-[#c6c6c6] bg-white pb-[3px] pl-[3px] text-[13px] whitespace-nowrap">
        <svg width="18" height="16" viewBox="0 0 17 16" className="shrink-0">
          <path d="M8 3h8v11H8z" fill="#fff" stroke="#d24726" />
          <path d="M10 7h4M10 9.500h4M10 12h4" stroke="#d24726" />
          <path d="M0 2l10-2v16L0 14z" fill="#d24726" />
          <text x="5" y="12" fontSize="10" fontWeight="700" textAnchor="middle" fill="#fff">P</text>
          <circle cx="14.500" cy="2" r="2" fill="#ff5722" />
        </svg>
        <span>月亮岛街道PPT.pptx</span>
        <button type="button" aria-label="关闭文档" className="shrink-0"><X size={16} strokeWidth={1.3} /></button>
        <button type="button" aria-label="文档菜单" className="shrink-0">⋮</button>
      </div>
      <button type="button" aria-label="新建" className="flex w-[26px] items-center justify-center border-r border-[#c6c6c6]"><Plus size={17} strokeWidth={2} className="text-[#777]" /></button>
      <div className="flex-1" />
      <button type="button" aria-label="魔法" className="flex w-[27px] items-center justify-center border-l border-[#c6c6c6]">
        <svg width="16" height="16" viewBox="0 0 16 16">
          <path d="M7 1l1.500 3L12 3l-1 3.500L13.500 9 10 9.500 8 13 6 9.500 2 10l2-3.500L2 3l3.500.5z" fill="#9b6fd1" stroke="#777" />
          <path d="M10 10l5 5" stroke="#777" strokeWidth="2" />
          <circle cx="7" cy="6.500" r="1.500" fill="#fff" />
        </svg>
      </button>
      <button type="button" aria-label="设置" className="flex w-[27px] items-center justify-center border-l border-[#c6c6c6]">
        <svg width="14" height="14" viewBox="0 0 14 14"><path fillRule="evenodd" fill="#e8893c" d="M4 0h2l1 1 1-1h2l1.500 3L14 4v2l-1 1 1 1v2l-2.500 1L10 14H8l-1-1-1 1H4l-1.500-3L0 10V8l1-1-1-1V4l2.500-1zM7 4.500a2.500 2.500 0 1 0 0 5 2.500 2.500 0 0 0 0-5z" /></svg>
      </button>
      <button type="button" className="flex items-center gap-1 border-l border-[#c6c6c6] pr-[13px] pl-[7px] text-xs whitespace-nowrap">
        <svg width="14" height="12" viewBox="0 0 14 12" fill="none" stroke="#666"><path d="M3.500 3.500v-3h10v7h-3M3.500 2h10M.5 4.500h10v7H.5zM.5 6h10" /></svg>
        多窗口模式
      </button>
    </div>
  );
}

function Workspace() {
  return (
    <main className="flex min-w-0 flex-1 flex-col border-x border-[#d0d0d0]">
      <DocumentTabs />
      <div className="mt-0.5 flex min-h-0 flex-1">
        <div className="flex w-[226px] shrink-0 items-start border-r border-[#d0d0d0] pt-3.5 pl-[13px] text-[#d24726]">
          <span className="w-[21px] text-[15px] leading-[14px]">1</span>
          <button type="button" aria-label="幻灯片 1" className="h-[100px] w-[171px] rounded-lg border-[3px] border-[#b7472a] bg-white" />
        </div>
        <div className="flex min-w-0 flex-1 flex-col">
          <div className="grid min-h-0 flex-1 grid-cols-[15px_1fr] grid-rows-[auto_auto] content-start gap-x-[25px] pt-0.5 pr-[33px] pl-1.5">
            <div className="col-start-2 mb-11"><Ruler quarters={67} /></div>
            <div className="row-start-2 flex"><Ruler quarters={38} vertical /></div>
            <div className="col-start-2 row-start-2 aspect-video border border-[#c4c4c4] bg-white" />
          </div>
          <p className="ml-0.5 h-[42px] shrink-0 border-t border-[#d0d0d0] pl-[9px] text-[15px] leading-[31px] text-[#555]">单击此处添加备注</p>
        </div>
      </div>
    </main>
  );
}

const toolCells: { title: string; icons: string[]; red?: string[] }[] = [
  { title: "对齐", icons: ["dLeft", "dCenter", "dRight", "dTop", "dMiddle", "dBottom", "dDistH", "dDistV", "dCenterBox"] },
  { title: "大小", icons: ["sizeW", "sizeH", "sizeBoth", "extL", "extR", "swap", "extT", "extB"] },
  {
    title: "参考线布局",
    icons: ["gLeft", "gCenter", "gRight", "gTop", "gMiddle", "gBottom", "gW", "gH", "gBox"],
    red: ["gLeft", "gCenter", "gRight", "gTop", "gMiddle", "gBottom", "gW", "gH", "gBox"],
  },
  { title: "选择", icons: ["selAll", "selDot", "selCheck", "up", "upOver", "cursor", "down", "downOver", "watch"], red: ["selCheck", "cursor", "watch"] },
  { title: "矢量", icons: ["union", "combine", "intersect", "subtract", "split", "letterBox", "cut"] },
  { title: "剪贴板", icons: ["copy", "copyDot"] },
  { title: "吸附", icons: ["snapL", "snapR", "", "snapT", "snapB"] },
  { title: "旋转", icons: ["rotL", "rotR", "", "flipH", "flipV"] },
  { title: "拆合", icons: ["splitH", "mergeH", "", "splitV", "mergeV"] },
];

function InfoDot() {
  return (
    <span className="flex size-3.5 items-center justify-center rounded-full bg-[#dcdee3] font-serif text-[10px] leading-none font-bold text-white italic">i</span>
  );
}

function DesignPane() {
  return (
    <aside className="flex w-[299px] shrink-0 flex-col">
      <PaneHeader title="设计工具" className="pr-3.5 pl-[13px]" />
      <div className="mr-2 mb-[5px] ml-[7px] min-h-0 flex-1 overflow-hidden bg-white text-xs text-[#606266]">
        <div className="grid grid-cols-2">
          {toolCells.map((cell) => (
            <section key={cell.title} className="border-b border-b-[#f2f4f5] pt-3.5 pb-[11px] odd:border-r odd:border-r-[#eceff0]">
              <h3 className="flex h-5 items-center gap-2 pl-4">
                {cell.title}
                <InfoDot />
              </h3>
              <div className="mt-0.5 grid auto-rows-[28px] grid-cols-[39px_39px_39px] pl-1.5">
                {cell.icons.map((icon, i) =>
                  icon ? (
                    <button
                      key={icon}
                      type="button"
                      aria-label={`${cell.title} ${i + 1}`}
                      className={`flex items-center justify-center ${cell.red?.includes(icon) ? "text-[#f5393d]" : "text-[#999]"}`}
                    >
                      <Glyph name={icon} />
                    </button>
                  ) : (
                    <span key="blank" />
                  ),
                )}
              </div>
            </section>
          ))}
        </div>
        <section className="border-b border-[#f2f4f5] pt-3.5 pr-[18px] pb-[11px] pl-4">
          <h3 className="flex h-5 items-center gap-2">
            文本框
            <InfoDot />
            <Eraser size={16} strokeWidth={1.3} className="ml-auto text-[#888]" />
          </h3>
          <div className="mt-1 grid grid-cols-[130px_1fr] text-[#999]">
            <label className="flex h-[25px] items-center gap-1">
              <input type="radio" name="fit" defaultChecked className="size-4 appearance-none rounded-full border border-[#eee] checked:border-[5px] checked:border-[#fdaea8]" />
              自由调整
            </label>
            <label className="flex h-[25px] items-center gap-1">
              <input type="radio" name="fit" className="size-4 appearance-none rounded-full border border-[#f5f5f5]" />
              根据文字
            </label>
            <label className="flex h-[25px] items-center gap-1">
              <input type="radio" name="fit" className="size-4 appearance-none rounded-full border border-[#f5f5f5]" />
              溢出缩排
            </label>
            <label className="relative flex h-[25px] items-center gap-1">
              <input type="checkbox" defaultChecked className="size-4 appearance-none rounded-xs checked:bg-[#fdaea8]" />
              <Check size={12} strokeWidth={2.5} className="pointer-events-none absolute left-0.5 text-white" />
              自动换行
            </label>
          </div>
        </section>
        <section className="pt-[15px] pr-[18px] pl-4">
          <h3 className="flex h-5 items-center gap-2">
            文本框边距
            <InfoDot />
            <Trash2 size={15} strokeWidth={1.3} className="ml-auto text-[#999]" />
            <RotateCw size={15} strokeWidth={1.3} className="ml-1.5 text-[#999]" />
          </h3>
          <div className="mt-2 grid grid-cols-[102px_102px] gap-7 pl-5">
            {["左边距", "右边距"].map((side) => (
              <span key={side} className="relative">
                <input aria-label={side} className="h-7 w-full border border-[#e6eaec]" />
                <ChevronUp size={8} className="absolute top-1 right-1.5 fill-[#bbb] text-[#bbb]" />
              </span>
            ))}
          </div>
        </section>
      </div>
    </aside>
  );
}

function StatusBar() {
  return (
    <footer className="flex h-[22px] shrink-0 items-center border-t border-white bg-[#f5f5f5] pl-2 text-xs whitespace-nowrap text-[#333]">
      <span>幻灯片 第 1 张，共 1 张</span>
      <button type="button" aria-label="校对" className="ml-6"><Glyph name="book" /></button>
      <button type="button" className="ml-4">简体中文(中国大陆)</button>
      <button type="button" className="ml-[18px] flex items-center gap-1"><Glyph name="access" />辅助功能: 一切就绪</button>
      <div className="flex-1" />
      <button type="button" className="mr-[19px] flex items-center gap-0.5"><Glyph name="notes" size={16} />备注</button>
      {["normal", "sorter", "reading", "show"].map((view) => (
        <button key={view} type="button" aria-label={view} className={`flex h-[21px] w-10 items-center justify-center ${view === "normal" ? "bg-[#dedede]" : ""}`}>
          <Glyph name={view} />
        </button>
      ))}
      <button type="button" aria-label="缩小" className="ml-1"><Minus size={13} strokeWidth={1.5} /></button>
      <input
        type="range"
        aria-label="显示比例"
        min={10}
        max={190}
        defaultValue={88}
        className="mx-0.5 h-3 w-[100px] appearance-none bg-[linear-gradient(#666,#666)] bg-[length:100%_1px] bg-center bg-no-repeat [&::-webkit-slider-thumb]:h-[11px] [&::-webkit-slider-thumb]:w-[5px] [&::-webkit-slider-thumb]:appearance-none [&::-webkit-slider-thumb]:bg-[#555]"
      />
      <button type="button" aria-label="放大"><Plus size={13} strokeWidth={1.5} /></button>
      <span className="ml-2.5 w-9">88%</span>
      <button type="button" aria-label="适应窗口" className="mr-1.5"><Glyph name="fitDark" /></button>
    </footer>
  );
}

const taskApps: { name: string; art: ReactNode; active?: boolean }[] = [
  {
    name: "Edge",
    art: (
      <svg width="26" height="26" viewBox="0 0 26 26">
        <path d="M1 13C1 5 7 1 13 1c7 0 12 5 12 10 0 4-3 6-6 6-3 0-4-1-3-2 2-3 0-6-4-6-5 0-9 3-11 4z" fill="#35c1b1" />
        <path d="M13 1c7 0 12 5 12 10 0 4-3 6-6 6-3 0-4-1-3-2 5-5 1-11-3-14z" fill="#6bd95b" />
        <path d="M1 13c0-4 4-7 9-7 4 0 7 3 6 7-1-3-3-4-5-3-4 2-3 9 3 11 4 1 7 0 10-2-3 5-8 6.500-12 6.500C6 25 1 20 1 13z" fill="#1a8ce0" />
      </svg>
    ),
  },
  {
    name: "资源管理器",
    art: (
      <svg width="24" height="20" viewBox="0 0 24 20">
        <path d="M1 1h9l2 2h11v16H1z" fill="#f0a51f" />
        <path d="M1 5h22v14H1z" fill="#ffd766" />
        <path d="M5 19v-7h14v7h-4v-3H9v3z" fill="#3f95dd" />
      </svg>
    ),
  },
  {
    name: "G",
    art: (
      <svg width="24" height="24" viewBox="0 0 24 24" fill="none">
        <rect width="24" height="24" rx="2" fill="#3d5068" />
        <path d="M18 5A8.500 8.500 0 1 0 17 19M16 8a5.500 5.500 0 1 0-3 9.500" stroke="#8fc9e8" strokeWidth="1.400" />
        <path d="M12 13h9M14 13v5M18 13v4" stroke="#8fc9e8" />
      </svg>
    ),
  },
  {
    name: "四叶草",
    art: (
      <svg width="26" height="26" viewBox="0 0 26 26" fill="#6cbf2c">
        <path d="M12 12C8 12 1 10 2 6s4-2 4-2 1-4 4-3 3 6 2 11zM14 12c4 1 11-1 10-5s-5-2-5-2-1-4-4-3-2 6-1 10z" fill="#8ad63f" />
        <path d="M12 13c-3-1-10 0-9 4s5 3 5 3 1 4 3 3 2-6 1-10zM14 13c4-1 9 1 9 4s-5 3-5 3-1 4-3 3-2-6-1-10z" />
        <path d="M13 12q1 8-2 13" stroke="#4e9a1e" strokeWidth="1.500" fill="none" />
      </svg>
    ),
  },
  {
    name: "远程桌面",
    art: (
      <svg width="22" height="20" viewBox="0 0 22 20">
        <path d="M0 1h22v14H0z" fill="#1c5f94" />
        <path d="M1 2h20v12H1z" fill="#45a5e6" />
        <path d="M9 15h4v2h3v1H6v-1h3z" fill="#223" />
      </svg>
    ),
  },
  { name: "PowerPoint", art: <PptLogo size={24} />, active: true },
  {
    name: "Word",
    art: (
      <svg width="24" height="24" viewBox="0 0 24 24">
        <path d="M6 1h18v7H6z" fill="#41a5ee" />
        <path d="M6 7h18v6H6z" fill="#2b7cd3" />
        <path d="M6 12h18v11H6z" fill="#185abd" />
        <rect y="5" width="14" height="14" rx="1" fill="#1b5dbe" />
        <text x="7" y="16" fontSize="10" fontWeight="700" textAnchor="middle" fill="#fff">W</text>
      </svg>
    ),
  },
  {
    name: "文档配置",
    art: (
      <svg width="24" height="26" viewBox="0 0 24 26" fill="none">
        <path d="M2 1h12l5 5v18H2z" fill="#f4f7fb" stroke="#9ab" />
        <path d="M5 5h3v3H5zM5 10.500h3v3H5zM5 16h3v3H5z" stroke="#345" />
        <path d="M10 6.500h5M10 12h3M10 17.500h2" stroke="#789" />
        <circle cx="15" cy="15" r="3" stroke="#f28c28" strokeWidth="2" />
        <circle cx="20" cy="19" r="3" stroke="#3a8fe0" strokeWidth="2" />
        <circle cx="14" cy="21" r="3" stroke="#e8b820" strokeWidth="2" />
      </svg>
    ),
  },
];

function Taskbar() {
  return (
    <footer className="flex h-[38px] shrink-0 items-center bg-[#2b3b47] text-sm text-white">
      <button type="button" aria-label="开始菜单" className="flex w-11 justify-center pr-1">
        <svg width="16" height="16" viewBox="0 0 16 16" fill="#fff"><path d="M0 2.200L7.300 1v6.600H0zM8 .9L16 0v7.600H8zM0 8.300h7.300V15L0 13.900zM8 8.300h8V16l-8-1.100z" /></svg>
      </button>
      <label className="flex h-full w-[288px] shrink-0 items-center gap-2.5 border-t border-[#bbb] bg-[#f2f2f2] px-[11px]">
        <Search size={19} strokeWidth={1.5} className="-scale-x-100 text-[#222]" />
        <input type="text" placeholder="搜索" aria-label="任务栏搜索" className="min-w-0 flex-1 bg-transparent outline-none placeholder:text-[#333]" />
      </label>
      <button type="button" aria-label="任务视图" className="flex h-full w-[50px] items-center justify-center">
        <svg width="16" height="16" viewBox="0 0 16 16" fill="none" stroke="#fff"><path d="M.5 0v2.500h10V0M.5 5h10v6H.5zM.5 16v-2.500h10V16M14 0v3M14 8v8M13 4.500h2v2h-2z" /></svg>
      </button>
      {taskApps.map((app) => (
        <button key={app.name} type="button" aria-label={app.name} className={`flex h-full w-[49px] items-center justify-center ${app.active ? "bg-[#566670]" : ""}`}>
          {app.art}
        </button>
      ))}
      <div className="flex-1" />
      <svg width="24" height="16" viewBox="0 0 24 16" fill="none" stroke="#fff" strokeWidth="1.300">
        <path d="M1 1h19v14H1zM20 4h3v11h-4M4 4h13M4 7h6v5H4zM12 7h5M12 9.500h5M12 12h5" />
      </svg>
      <span className="ml-2 whitespace-nowrap">9°C&nbsp; 局部晴朗</span>
      <div className="ml-[22px] flex items-center gap-2">
        <ChevronUp size={18} strokeWidth={1.5} />
        <svg width="16" height="16" viewBox="0 0 16 16" fill="none">
          <circle cx="8" cy="8" r="7.500" fill="#2a72c8" />
          <path d="M12 4.500A5 5 0 1 0 12.500 11M10.500 6.500a3 3 0 1 0 .5 3M8 8h2" stroke="#fff" strokeWidth="1.300" />
        </svg>
        <svg width="16" height="16" viewBox="0 0 16 16">
          <circle cx="7" cy="8" r="7" fill="#3fa0dc" />
          <path d="M1 5h12M1 11h12M7 1q-5 7 0 14M7 1q5 7 0 14" fill="none" stroke="#d5efff" />
          <path d="M8 8h8v7H8z" fill="#d9ae52" />
          <path d="M10 8V6a2 2 0 0 1 4 0v2" fill="none" stroke="#d9ae52" strokeWidth="1.500" />
        </svg>
        <svg width="16" height="16" viewBox="0 0 16 16">
          <path d="M1 2l7-2 7 2v6q-1 6-7 8-6-2-7-8z" fill="#f59a23" />
          <path d="M10 4l-5 5 2 3 5-5z" fill="#fff" />
        </svg>
        <svg width="16" height="16" viewBox="0 0 16 16" fill="none" stroke="#fff" strokeWidth="1.200"><path d="M6 4h9.500v7H5M10 11v3M6 14.500h8M.6 1.500h4v4h-4zM2.500 5.500V14H5" /></svg>
        <svg width="16" height="16" viewBox="0 0 16 16" fill="none" stroke="#fff" strokeWidth="1.200"><path d="M1 6h2l4-3.500v11L3 10H1zM9.500 6q1.500 2 0 4M12 4q3 4 0 8" /></svg>
        <span className="text-base leading-none">英</span>
        <span className="ml-1.5 bg-white px-px text-sm leading-4 text-black">拼</span>
      </div>
      <time className="ml-3 text-center text-xs leading-[19px]">
        21:27
        <br />
        2024/12/19
      </time>
      <button type="button" aria-label="通知" className="relative mr-8 ml-[17px] flex">
        <svg width="15" height="16" viewBox="0 0 15 16"><path d="M0 0h15v12H9l-3 4v-4H0z" fill="#fff" /><path d="M3 3.500h9M3 6h9M3 8.500h9" stroke="#2b3b47" /></svg>
        <span className="absolute top-2 left-2 flex size-[15px] items-center justify-center rounded-full border border-[#aaa] bg-[#333] text-[10px] font-bold">1</span>
      </button>
    </footer>
  );
}

export default function App() {
  return (
    <div className="relative flex h-screen flex-col overflow-hidden bg-[#efefef] font-['Open_Sans','Noto_Sans_CJK_SC',sans-serif] text-[#262626]">
      <div className="flex min-h-0 flex-1">
        <div className="flex min-w-0 flex-1 flex-col">
          <TitleBar />
          <TabRow />
          <div className="mr-2 ml-1 shrink-0 rounded-lg bg-white shadow-[0_1px_3px_rgba(0,0,0,0.3)]">
            <div className="flex h-[101px]">
              <Ribbon />
              <button type="button" aria-label="折叠功能区" className="mr-[7px] self-end pb-1"><ChevronDown size={16} strokeWidth={1.7} /></button>
            </div>
            <QuickAccess />
          </div>
          <div className="relative mt-px flex min-h-0 flex-1 pb-0.5">
            <ShortcutPane />
            <Workspace />
            <DesignPane />
            <div className="pointer-events-none absolute top-[5px] left-2 h-[600px] w-[189px] border-2 border-[#ed1c24]" />
          </div>
          <StatusBar />
        </div>
        <div className="flex w-[5px] shrink-0 flex-col bg-[#f8f8f8]">
          <div className="h-[29px] bg-[#cdcdcd]" />
          <div className="mt-[76px] ml-[3px] flex-1 border-l border-[#e6e6e6]" />
        </div>
      </div>
      <Taskbar />
      <p className="pointer-events-none absolute right-1 bottom-2 text-[37px] leading-[50px] font-light whitespace-nowrap text-white/60 [text-shadow:0_0_2px_rgba(90,90,90,0.9)]">CSDN @小矮强</p>
    </div>
  );
}
